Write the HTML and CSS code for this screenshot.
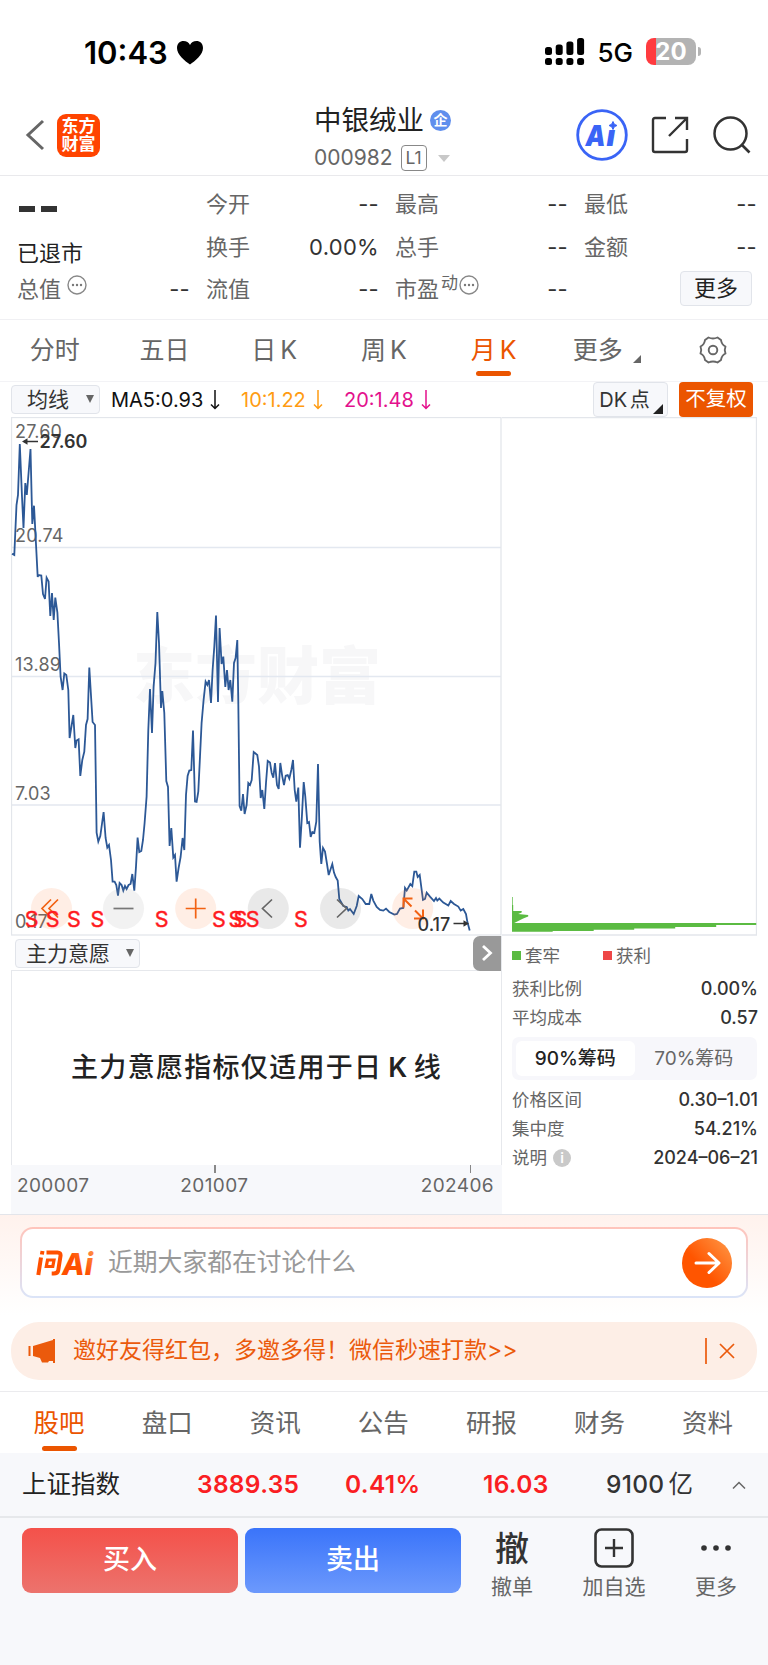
FILE: index.html
```html
<!DOCTYPE html>
<html lang="zh-CN">

<head>
    <meta charset="UTF-8">
    <meta name="viewport" content="width=device-width, initial-scale=1.0">
    <title>中银绒业 000982</title>
    <link rel="stylesheet" href="styles.css">
</head>

<body>

    <svg class="defs" width="0" height="0">
        <symbol id="down" viewBox="0 0 10 20"><path d="M5 0v18.500M1 14.500l4 4 4-4" fill="none" stroke="currentColor" stroke-width="1.500"/></symbol>
        <symbol id="dots" viewBox="0 0 20 20"><circle cx="10" cy="10" r="9" fill="none" stroke="#888" stroke-width="1.400"/><circle cx="6" cy="10" r="1.200" fill="#777"/><circle cx="10" cy="10" r="1.200" fill="#777"/><circle cx="14" cy="10" r="1.200" fill="#777"/></symbol>
    </svg>

    <div class="status">
        <span class="time">10:43</span>
        <svg class="heart" width="28" height="25" viewBox="0 0 28 25"><path d="M14 24.500C9 21 1 15 1 8 1 3.500 4 1 7.500 1 10.500 1 12.800 2.500 14 5c1.200-2.500 3.500-4 6.500-4C24 1 27 3.500 27 8c0 7-8 13-13 16.500z"/></svg>
        <svg class="signal" width="40" height="28" viewBox="0 0 40 28">
            <rect x="0" y="9" width="7" height="8" rx="2.500"/><rect x="10.700" y="6.500" width="7" height="10.500" rx="2.500"/><rect x="21.400" y="3.500" width="7" height="13.500" rx="2.500"/><rect x="32.100" y="0" width="7" height="17" rx="2.500"/>
            <rect x="0" y="20" width="7" height="7" rx="2.500"/><rect x="10.700" y="20" width="7" height="7" rx="2.500"/><rect x="21.400" y="20" width="7" height="7" rx="2.500"/><rect x="32.100" y="20" width="7" height="7" rx="2.500"/>
        </svg>
        <span class="net">5G</span>
        <span class="battery">20</span>
        <i class="battery-tip"></i>
    </div>

    <header class="header">
        <div class="header-left">
            <svg width="20" height="32" viewBox="0 0 20 32"><path d="M18 2L3 16l15 14" fill="none" stroke="#666" stroke-width="3"/></svg>
            <div class="brand">东方<br>财富</div>
        </div>
        <div class="header-title">
            <div class="name">中银绒业<span class="corp">企</span></div>
            <div class="code">000982<span class="level">L1</span><i></i></div>
        </div>
        <div class="header-icons">
            <svg width="52" height="52" viewBox="0 0 52 52">
                <circle cx="26" cy="26" r="24.300" fill="#fff" stroke="#3a64f6" stroke-width="2.800"/>
                <text x="9.500" y="36.500" class="ai-text" textLength="20" lengthAdjust="spacingAndGlyphs">A</text>
                <text x="30.500" y="36.500" class="ai-text">ı</text>
                <path d="M37 12.500l1.300 2.700 2.700 1.300-2.700 1.300-1.300 2.700-1.300-2.700-2.700-1.300 2.700-1.300z" fill="#3a64f6" stroke="#3a64f6"/>
            </svg>
            <svg class="share" width="38" height="38" viewBox="0 0 38 38"><path d="M15 2H4q-2 0-2 2v30q0 2 2 2h30q2 0 2-2V23M24 2h12v12M36 2L18 20" fill="none" stroke="#333" stroke-width="2.400"/></svg>
            <svg width="40" height="40" viewBox="0 0 40 40"><circle cx="18.500" cy="18.500" r="16" fill="none" stroke="#333" stroke-width="2.500"/><path d="M30 30l7.500 7.500" stroke="#333" stroke-width="2.600"/></svg>
        </div>
    </header>

    <section class="quote">
        <div class="price"><i></i><i></i></div>
        <div><span>今开</span><b>--</b></div>
        <div><span>最高</span><b>--</b></div>
        <div><span>最低</span><b>--</b></div>
        <div class="delisted">已退市</div>
        <div><span>换手</span><b>0.00%</b></div>
        <div><span>总手</span><b>--</b></div>
        <div><span>金额</span><b>--</b></div>
        <div><span>总值</span><svg class="hint"><use href="#dots"/></svg><b>--</b></div>
        <div><span>流值</span><b>--</b></div>
        <div><span>市盈</span><small>动</small><svg class="hint"><use href="#dots"/></svg><b>--</b></div>
        <div class="more"><button>更多</button></div>
    </section>

    <nav class="periods">
        <a>分时</a>
        <a>五日</a>
        <a>日 K</a>
        <a>周 K</a>
        <a class="active">月 K</a>
        <a class="corner">更多</a>
        <a><svg width="30" height="30" viewBox="0 0 30 30"><path d="M10.500 2.500Q15 4.500 19.500 2.500L23 5Q23.500 9.500 27.500 11.500Q26 15 27.500 18.500Q23.500 20.500 23 25L19.500 27.500Q15 25.500 10.500 27.500L7 25Q6.500 20.500 2.500 18.500Q4 15 2.500 11.500Q6.500 9.500 7 5Z" fill="none" stroke="#666" stroke-width="1.900" stroke-linejoin="round"/><circle cx="15" cy="15" r="4.300" fill="none" stroke="#666" stroke-width="1.900"/></svg></a>
    </nav>

    <div class="averages">
        <button class="select">均线</button>
        <span class="ma">MA5:0.93<svg><use href="#down"/></svg></span>
        <span class="ma ma10">10:1.22<svg><use href="#down"/></svg></span>
        <span class="ma ma20">20:1.48<svg><use href="#down"/></svg></span>
        <button class="dk">DK 点</button>
        <button class="adjust">不复权</button>
    </div>

    <main class="market">
        <div class="left">
            <svg class="chart" width="491" height="519" viewBox="11 417 491 519">
                <text x="133" y="699" class="watermark" textLength="248">东方财富</text>
                <path d="M11 547.500h490M11 676.500h490M11 805h490" stroke="#e3e8f0" stroke-width="1.500"/>
                <rect x="11.500" y="417.500" width="489.500" height="517.500" fill="none" stroke="#e3e6eb" stroke-width="1.300"/>
                <g class="scale">
                    <text x="15" y="437.500">27.60</text>
                    <text x="15" y="541.500">20.74</text>
                    <text x="15" y="670.500">13.89</text>
                    <text x="15" y="799.500">7.03</text>
                    <text x="15" y="928">0.17</text>
                </g>
                <polyline class="line" points="12,553.7 14.3,555 16.5,505 18,495 19.8,444 22,496.7 23.5,528 25.3,483 26.8,495 30.5,449 32.3,524 34,505.7 37.7,577 38.6,575 41.3,575.5 43,594 45,599 46.6,577.7 48.6,581.6 50.3,616 52,593 53.7,620 55.3,597.6 57.4,612.6 59,643 60.6,676.6 62.6,690 64.3,673.5 66.3,675 68.3,690 69.6,738 73.3,715 75.3,748 76.6,740.6 78.6,739.3 80.3,776 82.3,760 84.3,751.6 86,725 87.6,719 89.3,667.5 92.6,722 95,725 96.6,832.6 98.3,841.6 100.3,836 103.6,812 105.6,838 107.3,847.6 109,845 111,860 112.6,881.6 114.6,881.6 116.3,885 118,895.6 119.6,883 121.6,885 123.3,890.6 125,886 126.6,889 128.6,885 130.6,884 132.3,874 134.3,890.6 136,866.6 137.6,837.6 139.3,852 141.3,851 143,840 144.6,823 146.6,796.6 148.3,730 150,689 152,733 153.6,686.6 155.5,663 157.3,612 159,643 161,708 162.3,691 164.3,713 166.3,781 168,787 169.6,846 171.3,828 173.3,857.6 175,855 176.6,881.6 178.6,868 180.6,857 182.6,838 184.3,850 186,795 187.6,776 189.3,770.6 191.3,770 193,730.6 195,801.6 196.6,802 198.3,791.6 200,756.6 201.6,723 203.6,700 205.6,681.6 207.3,685 209,680 211,703 212.6,670 214.3,646.6 216,615.6 218,702 219.6,628 221.6,664 223.3,656.6 225.3,687 227,670 228.6,690 230.3,680 232.3,701.6 234,663 235.6,658 237.3,640 238.3,702 239.6,806 241.3,810.6 243,794 244.6,814 246.6,805 248.3,783 250,785 251.7,780 253.7,752 257.3,755 259,766.6 260.7,798 262.3,790 264.3,809 266,783 267.7,761 270,762.6 271.7,773 273.3,777.6 275,763 277,785 278.7,789 280.3,763 282.3,776.6 284,785 285.7,775.6 287.7,775 289.3,778.6 291.3,770 293,760 294.7,790 296.3,801.6 298.3,787.6 300,847.6 301.7,820 303.7,782 305.3,796.6 307.3,823 309,822 310.7,837 312.3,832 314.3,833 316.3,821.6 318,764 319.7,841.6 321.3,864 323,848 325,851.6 327,864 328.7,875 332.3,864 334,872.6 335.7,877 337.7,880.6 339.3,899 343.3,906 346.7,907 348.3,910.6 350,909 353.7,914 356.7,906 358.7,896 362.3,899 365.7,904 369.3,904 371.3,894 373.3,900.6 376.7,907 380,910 383.3,910.6 386,908.6 389.3,912 394.3,914.6 397,914 400,908.6 403.3,908 405,888 406.7,890.6 410.3,884 412.3,886 414.3,871.6 416.3,871.6 417.7,877 419.7,875 423,900 425,899 426.7,892.6 430,896.6 434,901 436,898 437.3,900.6 439.3,898.6 443.3,902.6 448.3,905.6 450.7,901 454,904 458.3,906.6 460.7,910.6 463.3,909 466,914 467.3,921.6 469.7,930.6"/>

                <!-- chart controls -->
                <g class="round">
                    <circle cx="51.500" cy="908.500" r="20.500" fill="#ff7832"/>
                    <circle cx="123.500" cy="908.500" r="20.500" fill="#999"/>
                    <circle cx="195.700" cy="908.500" r="20.500" fill="#ff7832"/>
                    <circle cx="268.300" cy="908.500" r="20.500" fill="#555"/>
                    <circle cx="340.500" cy="908.500" r="20.500" fill="#555"/>
                    <circle cx="412.700" cy="908.500" r="20.500" fill="#ff7832"/>
                </g>
                <g fill="none" stroke-width="1.700">
                    <path d="M51 899.500l-9 9 9 9M58 899.500l-9 9 9 9" stroke="#f26213"/>
                    <path d="M113.500 908.500h20" stroke="#777"/>
                    <path d="M185.700 908.500h20M195.700 898.500v20" stroke="#f26213"/>
                    <path d="M272 899.500l-9.500 9 9.500 9M337 899.500l9.500 9-9.500 9" stroke="#666"/>
                    <path d="M411.500 906.500l-7.500-7.500M403.500 907.500v-9h9M415 910.500l7.500 7.500M423 909.500v9h-9" stroke="#f26213" stroke-width="2"/>
                </g>
                <g class="sell">
                    <text x="31.600" y="927">S</text><text x="52.600" y="927">S</text><text x="74" y="927">S</text><text x="97.300" y="927">S</text><text x="161.700" y="927">S</text>
                    <text x="219" y="927">S</text><text x="235.500" y="927">S</text><text x="240.500" y="927">S</text><text x="252.600" y="927">S</text><text x="301" y="927">S</text>
                </g>
                <g class="mark">
                    <path d="M38 441.500H24" stroke="#333" stroke-width="1.500"/><path d="M22 441.500l5.500-3.200v6.400z"/>
                    <text x="39.500" y="448">27.60</text>
                    <text x="417.500" y="930.500" class="low">0.17</text>
                    <path d="M453.500 923.500h12" stroke="#333" stroke-width="1.500"/><path d="M469 923.500l-5.500-3.200v6.400z"/>
                </g>
            </svg>
            <div class="indicator">
                <button class="select wide">主力意愿</button>
                <span class="toggle"><svg width="12" height="18" viewBox="0 0 12 18"><path d="M2 2l7.500 7L2 16" fill="none" stroke="#fff" stroke-width="2.800"/></svg></span>
            </div>
            <div class="message">主力意愿指标仅适用于日<em>K</em>线</div>
            <div class="dates">
                <span>200007</span>
                <span class="tick">201007</span>
                <span class="tick last">202406</span>
            </div>
        </div>

        <aside class="chips">
            <svg class="distribution" width="255" height="519" viewBox="502 417 255 519"><path d="M502 417.500h254.500v517.500H502" fill="none" stroke="#e3e6eb" stroke-width="1.300"/><path fill="#5bbb42" d="M512 897h.700v8h.500v6h8.500v1.500l-3.500 1.500 10 1v1.500l-5 2-4 2-5 2.500h242v2h-40v2h-41v1.400h-41v1.300h-40.500v1.300h-41v.800H512z"/></svg>
            <div class="legend"><span>套牢</span><span class="gain">获利</span></div>
            <div class="row">获利比例<b>0.00%</b></div>
            <div class="row">平均成本<b>0.57</b></div>
            <div class="segmented"><span class="active">90%筹码</span><span>70%筹码</span></div>
            <div class="row">价格区间<b>0.30–1.01</b></div>
            <div class="row">集中度<b>54.21%</b></div>
            <div class="row">说明<i>i</i><b>2024–06–21</b></div>
        </aside>
    </main>

    <section class="promo">
        <div class="ask">
            <svg class="ask-logo" width="60" height="30" viewBox="0 0 60 30">
                <defs><linearGradient id="fire" x1="0" y1="1" x2="1" y2="0"><stop offset="0.500" stop-color="#ff5000"/><stop offset="1" stop-color="#ff9a55"/></linearGradient></defs>
                <g fill="none" stroke="#ff5000" stroke-width="4">
                    <path d="M5 9.500L2.300 27M6.500 3l-.6 3.500M10.500 4.500h11q3.500 0 3 3.500l-2.300 14.500q-.6 3-4.500 3h-2"/>
                    <path d="M11.500 12h6.500l-1.200 6.500h-6.500z" stroke-width="3.200"/>
                </g>
                <text x="26" y="27" class="ask-text" textLength="31" lengthAdjust="spacingAndGlyphs">Ai</text>
            </svg>
            <span>近期大家都在讨论什么</span>
            <svg class="go" width="50" height="50" viewBox="0 0 50 50">
                <defs><linearGradient id="go" x1="0.200" y1="0.700" x2="1" y2="0"><stop offset="0.200" stop-color="#ff5500"/><stop offset="1" stop-color="#ff9b4a"/></linearGradient></defs>
                <circle cx="25" cy="25" r="25" fill="url(#go)"/><path d="M14 25h22M27 15.500l10 9.500-10 9.500" fill="none" stroke="#fff" stroke-width="3" stroke-linecap="round" stroke-linejoin="round"/>
            </svg>
        </div>
        <div class="invite">
            <svg width="28" height="26" viewBox="0 0 28 26"><path d="M.5 8h2v10h-2zM5 8L25 2V1h2v24h-2v-2h-4l-1 1.500h-6L12 20 5 18z" fill="#eb5a0c"/></svg>
            <span>邀好友得红包，多邀多得！微信秒速打款&gt;&gt;</span>
            <svg class="close" width="30" height="28" viewBox="0 0 30 28"><path d="M1 1v26M15 7l14 14M29 7L15 21" fill="none" stroke="#eb5a0c" stroke-width="1.700"/></svg>
        </div>
    </section>

    <nav class="sections">
        <a class="active">股吧</a>
        <a>盘口</a>
        <a>资讯</a>
        <a>公告</a>
        <a>研报</a>
        <a>财务</a>
        <a>资料</a>
    </nav>

    <div class="index">
        <span class="index-name">上证指数</span>
        <b>3889.35</b>
        <b>0.41%</b>
        <b>16.03</b>
        <b class="turnover">9100<span>亿</span></b>
        <svg width="14" height="8" viewBox="0 0 14 8"><path d="M1 7.500l6-6 6 6" fill="none" stroke="#666" stroke-width="1.500"/></svg>
    </div>

    <footer class="actions">
        <button class="buy">买入</button>
        <button class="sell-btn">卖出</button>
        <div class="action"><strong>撤</strong>撤单</div>
        <div class="action"><svg width="40" height="40" viewBox="0 0 40 40"><rect x="1.500" y="1.500" width="37" height="37" rx="6" fill="none" stroke="#333" stroke-width="2.600"/><path d="M11 20h18M20 11v18" stroke="#333" stroke-width="2.400"/></svg>加自选</div>
        <div class="action"><svg width="40" height="40" viewBox="0 0 40 40" fill="#333"><circle cx="8" cy="20" r="2.800"/><circle cx="20" cy="20" r="2.800"/><circle cx="32" cy="20" r="2.800"/></svg>更多</div>
    </footer>

</body>

</html>
```

FILE: styles.css
```css
*{
    box-sizing: border-box;
}
body{
    margin: 0;
    width: 768px;
    height: 1665px;
    overflow: hidden;
    background: #fff;
    color: #333;
    font-family: Inter, "Noto Sans CJK SC", sans-serif;
    font-size: 22px;
    line-height: 1.2;
    white-space: nowrap;
}
svg{
    display: block;
    flex: none;
}
button{
    font: inherit;
    color: inherit;
    padding: 0;
    border: 1.5px solid #e1e4ea;
    border-radius: 4px;
    background: #f7f8fb;
}
.defs{
    position: absolute;
}

/* status bar */
.status{
    height: 95px;
    padding: 10px 67px 0 84px;
    display: flex;
    align-items: center;
    color: #000;
}
.time{
    font-size: 31px;
    font-weight: 600;
    width: 92px;
}
.heart{
    margin-right: auto;
}
.signal{
    margin-top: -2px;
}
.net{
    font-size: 26px;
    font-weight: 500;
    margin: 0 13px 0 12px;
}
.battery{
    width: 50px;
    height: 27px;
    margin-top: -2px;
    border-radius: 8px;
    background: linear-gradient(90deg, #ff3b3f 10px, #b3b3b3 10px);
    color: #fff;
    font-size: 24px;
    font-weight: 700;
    line-height: 27px;
    text-align: center;
}
.battery-tip{
    width: 3px;
    height: 9px;
    margin: -2px 0 0 2px;
    border-radius: 0 3px 3px 0;
    background: #b3b3b3;
}

/* header */
.header{
    height: 81px;
    display: grid;
    grid-template-columns: 314px 1fr auto;
    border-bottom: 1.5px solid #e9e9ec;
}
.header-left{
    display: flex;
    align-items: center;
    padding-left: 25px;
    gap: 12px;
}
.brand{
    width: 43px;
    height: 43px;
    border-radius: 9px;
    background: #ff4400;
    color: #fff;
    font-size: 17px;
    font-weight: 700;
    line-height: 18px;
    padding-top: 3px;
    text-align: center;
}
.name{
    display: flex;
    align-items: center;
    height: 34px;
    margin-top: 8px;
    font-size: 27.5px;
    color: #222;
}
.corp{
    width: 21px;
    height: 21px;
    margin-left: 6px;
    border-radius: 50%;
    background: #5f8eed;
    color: #fff;
    font-size: 14px;
    font-weight: 700;
    line-height: 20px;
    text-align: center;
}
.code{
    display: flex;
    align-items: center;
    height: 32px;
    margin-top: 5px;
    color: #666;
    font-size: 21px;
}
.level{
    width: 26px;
    height: 26px;
    margin-left: 8px;
    border: 1.5px solid #888;
    border-radius: 4px;
    font-size: 17.5px;
    line-height: 24px;
    text-align: center;
}
.code i{
    margin-left: 11px;
    border: 6.5px solid transparent;
    border-top: 7px solid #c8c8c8;
    border-bottom: 0;
}
.header-icons{
    display: flex;
    align-items: center;
    padding-right: 16px;
}
.share{
    margin: 0 23px;
}
.ai-text{
    font-size: 29px;
    font-weight: 900;
    font-style: italic;
    fill: #3a64f6;
}

/* quote */
.quote{
    height: 144px;
    padding: 7px 12px 0 17px;
    display: grid;
    grid-template-columns: repeat(4, 172px);
    grid-template-rows: repeat(3, 42.5px);
    column-gap: 17px;
    border-bottom: 1.5px solid #f0f0f3;
    color: #666;
}
.quote > div{
    display: flex;
    align-items: center;
}
.quote b{
    margin-left: auto;
    margin-right: -1px;
    color: #333;
    font-weight: 400;
    letter-spacing: 0.3px;
}
.quote .price{
    gap: 6px;
    padding: 10px 0 0 2px;
}
.price i{
    width: 16px;
    height: 6px;
    background: #333;
}
.quote .delisted{
    color: #222;
    padding-top: 12px;
}
.hint{
    width: 20px;
    height: 20px;
    margin: -9px 0 0 6px;
}
.quote small{
    font-size: 17px;
    margin: -12px -5px 0 2px;
}
.quote .more{
    justify-content: flex-end;
    padding-right: 4px;
}
.more button{
    width: 72px;
    height: 35px;
    margin-top: -2px;
    color: #222;
}

/* period tabs */
.periods{
    height: 62px;
    display: flex;
    padding-bottom: 1px;
    border-bottom: 1.5px solid #f3f3f6;
    color: #666;
    font-size: 25px;
    word-spacing: -3px;
}
.periods a{
    position: relative;
    width: 109.7px;
    display: flex;
    align-items: center;
    justify-content: center;
}
.periods .active,
.sections .active{
    color: #eb5500;
}
.periods .active:after,
.sections .active:after{
    content: "";
    position: absolute;
    left: calc(50% - 17.5px);
    bottom: 2px;
    width: 35px;
    height: 5.5px;
    border-radius: 3px;
    background: #eb5500;
}
.periods .active:after{
    bottom: 4px;
}
.periods .corner{
    padding-right: 11px;
}
.periods .corner:after{
    content: "";
    position: absolute;
    right: 17px;
    bottom: 17px;
    border-left: 8px solid transparent;
    border-bottom: 8px solid #666;
}

/* moving averages */
.averages{
    height: 35px;
    display: flex;
    align-items: center;
    padding: 0 15px 0 11px;
    font-size: 20px;
}
.select{
    position: relative;
    width: 89px;
    height: 29px;
    padding-left: 15px;
    font-size: 21px;
    line-height: 25px;
    text-align: left;
}
.select:after{
    content: "";
    position: absolute;
    right: 5px;
    top: 9px;
    border: 4.5px solid transparent;
    border-top: 8px solid #666;
    border-bottom: 0;
}
.wide{
    width: 125px;
    padding-left: 10px;
}
.ma{
    display: flex;
    align-items: center;
    gap: 7px;
    margin-left: 11px;
    width: 119px;
    color: #111;
}
.ma svg{
    width: 10px;
    height: 20px;
}
.ma10{
    width: 92px;
    color: #ff9c12;
}
.ma20{
    color: #e3118c;
}
.dk{
    position: relative;
    width: 75px;
    height: 35px;
    margin-left: auto;
    padding-right: 12px;
    word-spacing: -3px;
}
.dk:after{
    content: "";
    position: absolute;
    right: 4px;
    bottom: 2px;
    border-left: 10px solid transparent;
    border-bottom: 10px solid #222;
}
.adjust{
    width: 74px;
    height: 35px;
    margin-left: 11px;
    border: 0;
    background: #eb5500;
    color: #fff;
    font-size: 20.5px;
}

/* chart */
.market{
    height: 798px;
    display: flex;
    padding-left: 11px;
    border-bottom: 1.5px solid #e3e5ea;
}
.left{
    width: 491px;
}
.watermark{
    font-family: "Noto Sans CJK SC", sans-serif;
    font-size: 62px;
    font-weight: 900;
    fill: #f7f7f8;
}
.scale{
    font-size: 18px;
    letter-spacing: 0.2px;
    fill: #666;
}
.line{
    fill: none;
    stroke: #2c5896;
    stroke-width: 1.8;
    stroke-linejoin: miter;
}
.round{
    opacity: 0.12;
}
.sell{
    font-size: 21.5px;
    text-anchor: middle;
    fill: #ff1a1e;
    stroke: #ff1a1e;
    stroke-width: 0.4;
}
.mark{
    font-size: 18px;
    font-weight: 600;
    fill: #333;
}
.mark .low{
    font-weight: 500;
}
.indicator{
    height: 34px;
    display: flex;
    align-items: center;
    justify-content: space-between;
    padding-left: 4px;
    border-right: 1.5px solid #e6e8ec;
}
.toggle{
    width: 28px;
    height: 35px;
    display: flex;
    align-items: center;
    justify-content: center;
    border-radius: 7px 0 0 7px;
    background: #999;
}
.message{
    height: 195px;
    border: 1.5px solid #e6e8ec;
    border-bottom: 0;
    color: #222;
    font-size: 27px;
    font-weight: 500;
    letter-spacing: 1.3px;
    line-height: 194px;
    text-align: center;
}
.message em{
    font-style: normal;
    font-weight: 600;
    margin: 0 5px 0 6px;
}
.dates{
    height: 49px;
    display: flex;
    padding: 10px 8px 0 6px;
    background: #f7f8fb;
    color: #666;
    font-size: 19px;
    letter-spacing: 0.4px;
}
.dates span{
    position: relative;
}
.dates .tick{
    margin-left: 91px;
}
.dates .last{
    margin-left: auto;
}
.tick:before{
    content: "";
    position: absolute;
    left: 34px;
    top: -10px;
    width: 1.5px;
    height: 8px;
    background: #888;
}
.last:before{
    left: 49px;
}

/* chip distribution */
.chips{
    width: 255px;
    padding-left: 9px;
    color: #666;
    font-size: 17.5px;
}
.distribution{
    margin-left: -9px;
}
.legend{
    height: 38px;
    display: flex;
    padding-left: 1px;
}
.legend span{
    display: flex;
    align-items: center;
    width: 91px;
}
.legend span:before{
    content: "";
    width: 9px;
    height: 9px;
    margin-right: 4px;
    background: #5bbb42;
}
.legend .gain:before{
    background: #ee4747;
}
.row{
    height: 29px;
    display: flex;
    align-items: center;
    padding-left: 1px;
}
.row b{
    margin-left: auto;
    margin-right: -1px;
    color: #333;
    font-size: 18px;
    font-weight: 500;
}
.row i{
    width: 18px;
    height: 18px;
    margin-left: 6px;
    border-radius: 50%;
    background: #c9c9c9;
    color: #fff;
    font-size: 14px;
    font-style: normal;
    font-weight: 600;
    line-height: 18px;
    text-align: center;
}
.segmented{
    height: 43px;
    margin: 5px 0 5px 1px;
    display: flex;
    padding: 4px;
    border-radius: 7px;
    background: #f7f7fb;
    font-size: 19px;
    line-height: 35px;
    text-align: center;
}
.segmented span{
    width: 119px;
    border-radius: 6px;
}
.segmented .active{
    background: #fff;
    color: #222;
    font-weight: 500;
}

/* promo */
.promo{
    height: 177px;
    padding-top: 12px;
    background: linear-gradient(#fff2ed, #fff 100px);
    border-bottom: 1.5px solid #ebebee;
}
.ask{
    height: 71px;
    margin: 0 20px 24px;
    padding: 0 14px;
    display: flex;
    align-items: center;
    border: 2px solid transparent;
    border-radius: 13px;
    background: linear-gradient(#fff, #fff) padding-box, linear-gradient(#ffc4bb, #dbe4f8) border-box;
    color: #999;
    font-size: 24.8px;
}
.ask-logo{
    margin-right: 12px;
}
.ask-text{
    font-size: 30px;
    font-weight: 800;
    font-style: italic;
    fill: url(#fire);
}
.go{
    margin-left: auto;
}
.invite{
    height: 58px;
    margin: 0 11px;
    padding: 0 22px 0 17px;
    display: flex;
    align-items: center;
    border-radius: 28px;
    background: #fdeee6;
    color: #eb5a0c;
    font-size: 23px;
}
.invite span{
    margin-left: 17px;
}
.close{
    margin-left: auto;
}

/* section tabs */
.sections{
    height: 61px;
    display: flex;
    padding-left: 5px;
    color: #666;
    font-size: 25.5px;
}
.sections a{
    position: relative;
    width: 108.1px;
    line-height: 62px;
    text-align: center;
}

/* index */
.index{
    height: 65px;
    display: flex;
    align-items: center;
    padding: 0 22px;
    border-bottom: 2px solid #e6e8eb;
    background: #f7f8fb;
    color: #222;
    font-size: 24.5px;
}
.index b{
    color: #fa1e23;
    font-weight: 600;
    letter-spacing: 0.3px;
}
.index-name{
    width: 175px;
}
.index b:nth-of-type(1){
    width: 148px;
}
.index b:nth-of-type(2){
    width: 138px;
}
.index b:nth-of-type(3){
    width: 123px;
}
.index .turnover{
    color: #333;
    font-weight: 500;
}
.turnover span{
    margin-left: 4px;
    font-weight: 400;
}
.index svg{
    margin-left: auto;
}

/* bottom actions */
.actions{
    height: 148px;
    display: flex;
    align-items: flex-start;
    padding: 10px 0 0 22px;
    background: #f7f8fb;
}
.buy,
.sell-btn{
    width: 216px;
    height: 65px;
    margin-right: 7px;
    border: 0;
    border-radius: 9px;
    color: #fff;
    font-size: 27px;
    font-weight: 500;
}
.buy{
    background: linear-gradient(#f4514a, #ec736d);
}
.sell-btn{
    margin-right: 0;
    background: linear-gradient(#3a74fa, #6c99fc);
}
.action{
    width: 102px;
    height: 73px;
    display: flex;
    flex-direction: column;
    align-items: center;
    gap: 6px;
    color: #666;
    font-size: 21px;
}
.action strong{
    height: 40px;
    color: #333;
    font-size: 34px;
    font-weight: 500;
    line-height: 42px;
}
```
